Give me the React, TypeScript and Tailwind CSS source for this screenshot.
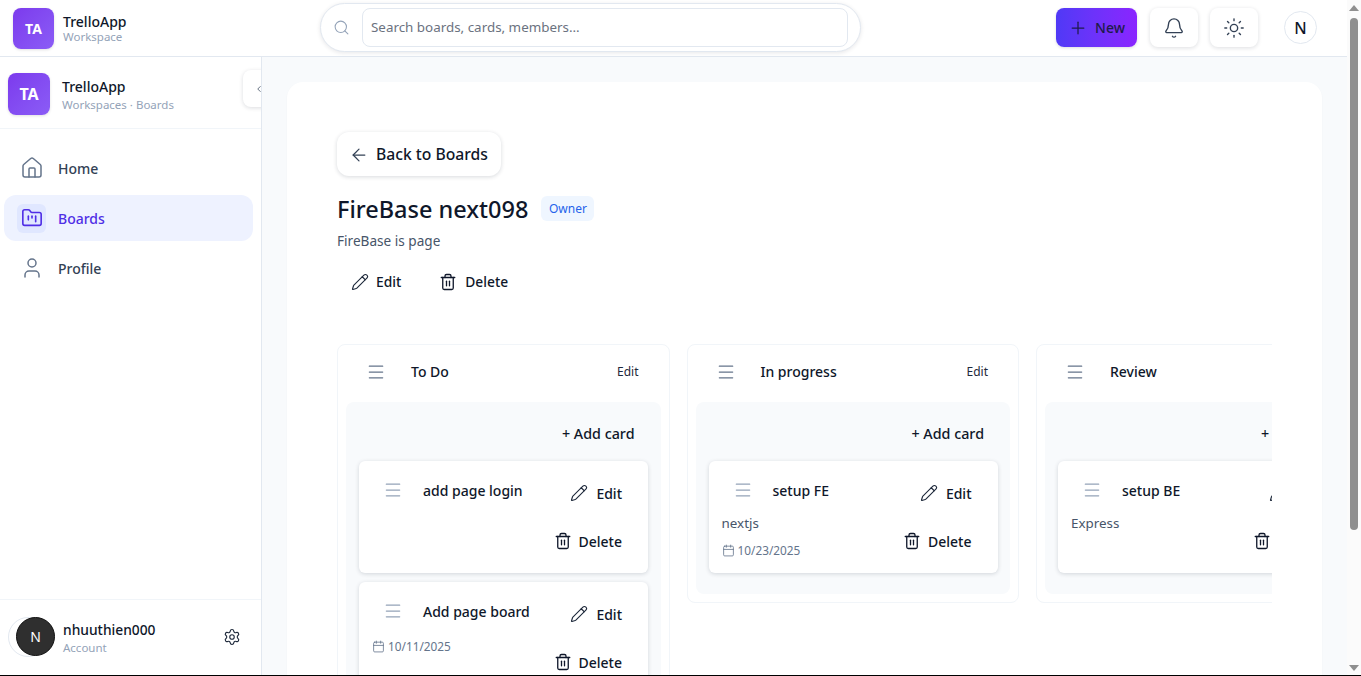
import { ArrowLeft, Bell, Calendar, FolderKanban, House, Menu, Pencil, Plus, Search, Settings, Sun, Trash2, User, ChevronLeft } from "lucide-react";

function Actions() {
  return (
    <div className="flex flex-col items-end shrink-0 gap-[24px] pr-[26px] pt-[20px]">
      <div className="flex items-center gap-[8px] h-[24px] text-[14px] font-medium text-[#0f172a]">
        <Pencil size={18} strokeWidth={1.5} className="text-[#1e293b]" />
        <span>Edit</span>
      </div>
      <div className="flex items-center gap-[7px] h-[24px] text-[14px] font-medium text-[#0f172a]">
        <Trash2 size={18} strokeWidth={1.75} />
        <span>Delete</span>
      </div>
    </div>
  );
}

function TaskCard({ title, desc, date }: { title: string; desc?: string; date?: string }) {
  return (
    <div className="flex h-[112px] w-[289px] shrink-0 rounded-md bg-white shadow-[0_1px_4px_rgba(15,23,42,0.16)]">
      <div className="flex-1 min-w-0 pl-[13px] pt-[17px]">
        <div className="flex items-center h-[24px]">
          <Menu size={20} strokeWidth={1.5} className="ml-[11px] text-[#94a3b8]" />
          <span className="ml-[20px] text-[14px] font-medium text-[#0f172a]">{title}</span>
        </div>
        {desc && <div className="mt-[11px] h-[20px] text-[13.4px] leading-[20px] text-[#475569]">{desc}</div>}
        {date && (
          <div className={`flex items-center gap-[3px] text-[11.8px] text-[#64748b] ${desc ? "mt-[9px]" : "mt-[15px]"}`}>
            <Calendar size={13} strokeWidth={1.5} />
            <span>{date}</span>
          </div>
        )}
      </div>
      <Actions />
    </div>
  );
}

function Column({ title, children }: { title: string; children: React.ReactNode }) {
  return (
    <div className="w-[332.5px] shrink-0 self-start rounded-lg border border-[#f1f5f9] bg-white px-[8px] pb-[8px]">
      <div className="flex items-center h-[57px] pb-[4px]">
        <Menu size={20} strokeWidth={1.5} className="ml-[20px] text-[#64748b]" />
        <span className="ml-[25px] flex-1 text-[14px] font-medium text-[#0f172a]">{title}</span>
        <span className="mr-[22px] text-[12px] text-[#1e293b]">Edit</span>
      </div>
      <div className="rounded-lg bg-[#f8fafc] px-[13px] pb-[21px]">
        <div className="flex justify-end items-center h-[59px] pt-[4px] pr-[13px] text-[14.3px] font-medium text-[#0f172a]">+ Add card</div>
        <div className="flex flex-col gap-[9px]">{children}</div>
      </div>
    </div>
  );
}

function NavItem({ icon, label, active }: { icon: React.ReactNode; label: string; active?: boolean }) {
  return (
    <div className={`flex items-center h-[46px] rounded-xl ${active ? "bg-[#eef2ff] text-[#4f2ee6]" : "text-[#334155]"}`}>
      <div className={`ml-[13px] flex items-center justify-center w-[29px] h-[29px] rounded-md ${active ? "bg-[#e0e7ff]" : ""}`}>{icon}</div>
      <span className="ml-[12px] text-[14px] font-medium">{label}</span>
    </div>
  );
}

function Logo({ size, text }: { size: string; text: string }) {
  return (
    <div className={`${size} ${text} flex items-center justify-center rounded-lg bg-gradient-to-br from-[#7c3aed] to-[#8b5cf6] font-bold text-white shadow-[0_1px_3px_rgba(0,0,0,0.12)] shrink-0`}>TA</div>
  );
}

export default function App() {
  return (
    <div className="flex h-[676px] w-[1361px] overflow-hidden border-b border-black bg-white font-['Noto_Sans',sans-serif]">
      <div className="flex flex-col w-[1347px] shrink-0 h-full">
        <header className="flex items-center h-[57px] shrink-0 border-b border-[#e2e8f0] bg-white">
          <div className="ml-[13px] flex items-center gap-[9px] w-[307px] shrink-0">
            <Logo size="w-[41px] h-[41px]" text="text-[14px]" />
            <div className="leading-none">
              <div className="text-[14px] leading-[17px] font-medium text-[#0f172a]">TrelloApp</div>
              <div className="text-[11.5px] leading-[13px] text-[#94a3b8]">Workspace</div>
            </div>
          </div>
          <div className="flex items-center w-[541px] h-[49px] -mt-[2px] shrink-0 rounded-full border border-[#e2e8f0] bg-white shadow-[0_1px_4px_rgba(15,23,42,0.1)] pl-[12px] pr-[12px]">
            <Search size={17} strokeWidth={1.5} className="text-[#94a3b8] shrink-0" />
            <div className="ml-[12px] flex items-center flex-1 h-[39px] rounded-lg border border-[#e2e8f0] px-[8px] pt-[1px] text-[13.4px] text-[#6b7280]">Search boards, cards, members...</div>
          </div>
          <div className="ml-auto flex items-center mr-[30px] -mt-[1px]">
            <div className="flex items-center justify-center gap-[7px] w-[81px] h-[39px] rounded-lg bg-gradient-to-r from-[#4f39f6] to-[#8a24ff] text-[14px] font-medium text-[#1e1b4b] shadow-[0_1px_3px_rgba(15,23,42,0.15)]">
              <Plus size={20} strokeWidth={1.5} />
              <span>New</span>
            </div>
            <div className="ml-[13px] flex items-center justify-center w-[48px] h-[39px] rounded-lg bg-white shadow-[0_1px_4px_rgba(15,23,42,0.14)] text-[#334155]">
              <Bell size={22} strokeWidth={1.5} />
            </div>
            <div className="ml-[12px] flex items-center justify-center w-[48px] h-[39px] rounded-lg bg-white shadow-[0_1px_4px_rgba(15,23,42,0.14)] text-[#334155]">
              <Sun size={22} strokeWidth={1.5} className="-ml-[1px]" />
            </div>
            <div className="ml-[26px] flex items-center justify-center w-[33px] h-[33px] rounded-full border border-[#e2e8f0] text-[16px] font-medium text-[#0f172a]">N</div>
          </div>
        </header>
        <div className="flex flex-1 min-h-0">
          <aside className="relative flex flex-col w-[262px] shrink-0 border-r border-[#e2e8f0] bg-white overflow-hidden">
            <div className="flex items-center h-[72px] shrink-0 border-b border-[#f1f5f9] pl-[8px] pt-[3px]">
              <Logo size="w-[42px] h-[42px]" text="text-[16px]" />
              <div className="ml-[12px]">
                <div className="text-[14px] leading-[20px] mt-[1px] font-medium text-[#0f172a]">TrelloApp</div>
                <div className="text-[11.5px] leading-[16px] text-[#94a3b8]">Workspaces · Boards</div>
              </div>
            </div>
            <div className="absolute left-[243px] top-[13px] flex items-center justify-end w-[30px] h-[37px] rounded-lg bg-white shadow-[0_1px_4px_rgba(15,23,42,0.15)]">
              <ChevronLeft size={10} className="mr-[9px] text-[#475569]" />
            </div>
            <nav className="flex flex-col gap-[4px] pt-[16px] pl-[4px] pr-[8px]">
              <NavItem label="Home" icon={<House size={24} strokeWidth={1.5} className="text-[#64748b]" />} />
              <NavItem label="Boards" active icon={<FolderKanban size={22} strokeWidth={1.75} />} />
              <NavItem label="Profile" icon={<User size={24} strokeWidth={1.5} className="text-[#64748b]" />} />
            </nav>
            <div className="relative mt-auto flex items-center h-[76px] shrink-0 border-t border-[#f1f5f9]">
              <div className="absolute left-[8px] top-[17px] w-[40px] h-[40px] rounded-full border border-[#e2e8f0] bg-white" />
              <div className="relative ml-[16px] flex items-center justify-center w-[39px] h-[39px] rounded-full bg-[#2f2f2f] border border-[#111] text-[14px] text-white -mt-[3px]">N</div>
              <div className="relative ml-[8px] flex-1">
                <div className="text-[13.8px] leading-[20px] font-medium text-[#0f172a] mt-[1px]">nhuuthien000</div>
                <div className="text-[11.5px] leading-[16px] text-[#94a3b8]">Account</div>
              </div>
              <Settings size={18} strokeWidth={1.5} className="mr-[20px] -mt-[2px] text-[#1e293b]" />
            </div>
          </aside>
          <main className="flex-1 min-w-0 bg-[#f8fafc] pl-[25px] pr-[25px] pt-[25px] overflow-hidden">
            <div className="h-[700px] rounded-2xl bg-white shadow-[0_1px_2px_rgba(15,23,42,0.04)] px-[50px] pt-[50px]">
              <div className="flex items-center gap-[7px] pl-[12px] pt-[1px] w-[164px] h-[44px] rounded-xl bg-white shadow-[0_1px_4px_rgba(15,23,42,0.16)] text-[15.7px] font-medium text-[#0f172a]">
                <ArrowLeft size={20} strokeWidth={1.5} className="text-[#334155]" />
                <span>Back to Boards</span>
              </div>
              <div className="mt-[20px] flex items-center gap-[13px] h-[25px]">
                <h1 className="text-[23.5px] font-medium text-[#0f172a] leading-[36px]">FireBase next098</h1>
                <span className="flex items-center justify-center w-[53px] h-[25px] rounded-md bg-[#eff6ff] text-[12px] text-[#2563eb]">Owner</span>
              </div>
              <div className="mt-[10px] text-[13.6px] leading-[20px] text-[#475569]">FireBase is page</div>
              <div className="mt-[19px] flex items-center h-[24px] text-[13.8px] font-medium text-[#0f172a]">
                <Pencil size={18} strokeWidth={1.5} className="ml-[14px] text-[#1e293b]" />
                <span className="ml-[7px]">Edit</span>
                <Trash2 size={18} strokeWidth={1.75} className="ml-[38px]" />
                <span className="ml-[8px]">Delete</span>
              </div>
              <div className="mt-[50px] flex gap-[17px] overflow-hidden">
                <Column title="To Do">
                  <TaskCard title="add page login" />
                  <TaskCard title="Add page board" date="10/11/2025" />
                </Column>
                <Column title="In progress">
                  <TaskCard title="setup FE" desc="nextjs" date="10/23/2025" />
                </Column>
                <Column title="Review">
                  <TaskCard title="setup BE" desc="Express" />
                </Column>
              </div>
            </div>
          </main>
        </div>
      </div>
      <div className="flex flex-col items-center w-[14px] shrink-0 bg-[#fbfbfb]">
        <div className="mt-[5px] w-0 h-0 border-x-[5px] border-x-transparent border-b-[6px] border-b-[#8f8f8f]" />
        <div className="mt-[7px] w-[8px] h-[512px] rounded-full bg-[#8f8f8f]" />
        <div className="mt-auto mb-[4px] w-0 h-0 border-x-[5px] border-x-transparent border-t-[6px] border-t-[#8f8f8f]" />
      </div>
    </div>
  );
}
